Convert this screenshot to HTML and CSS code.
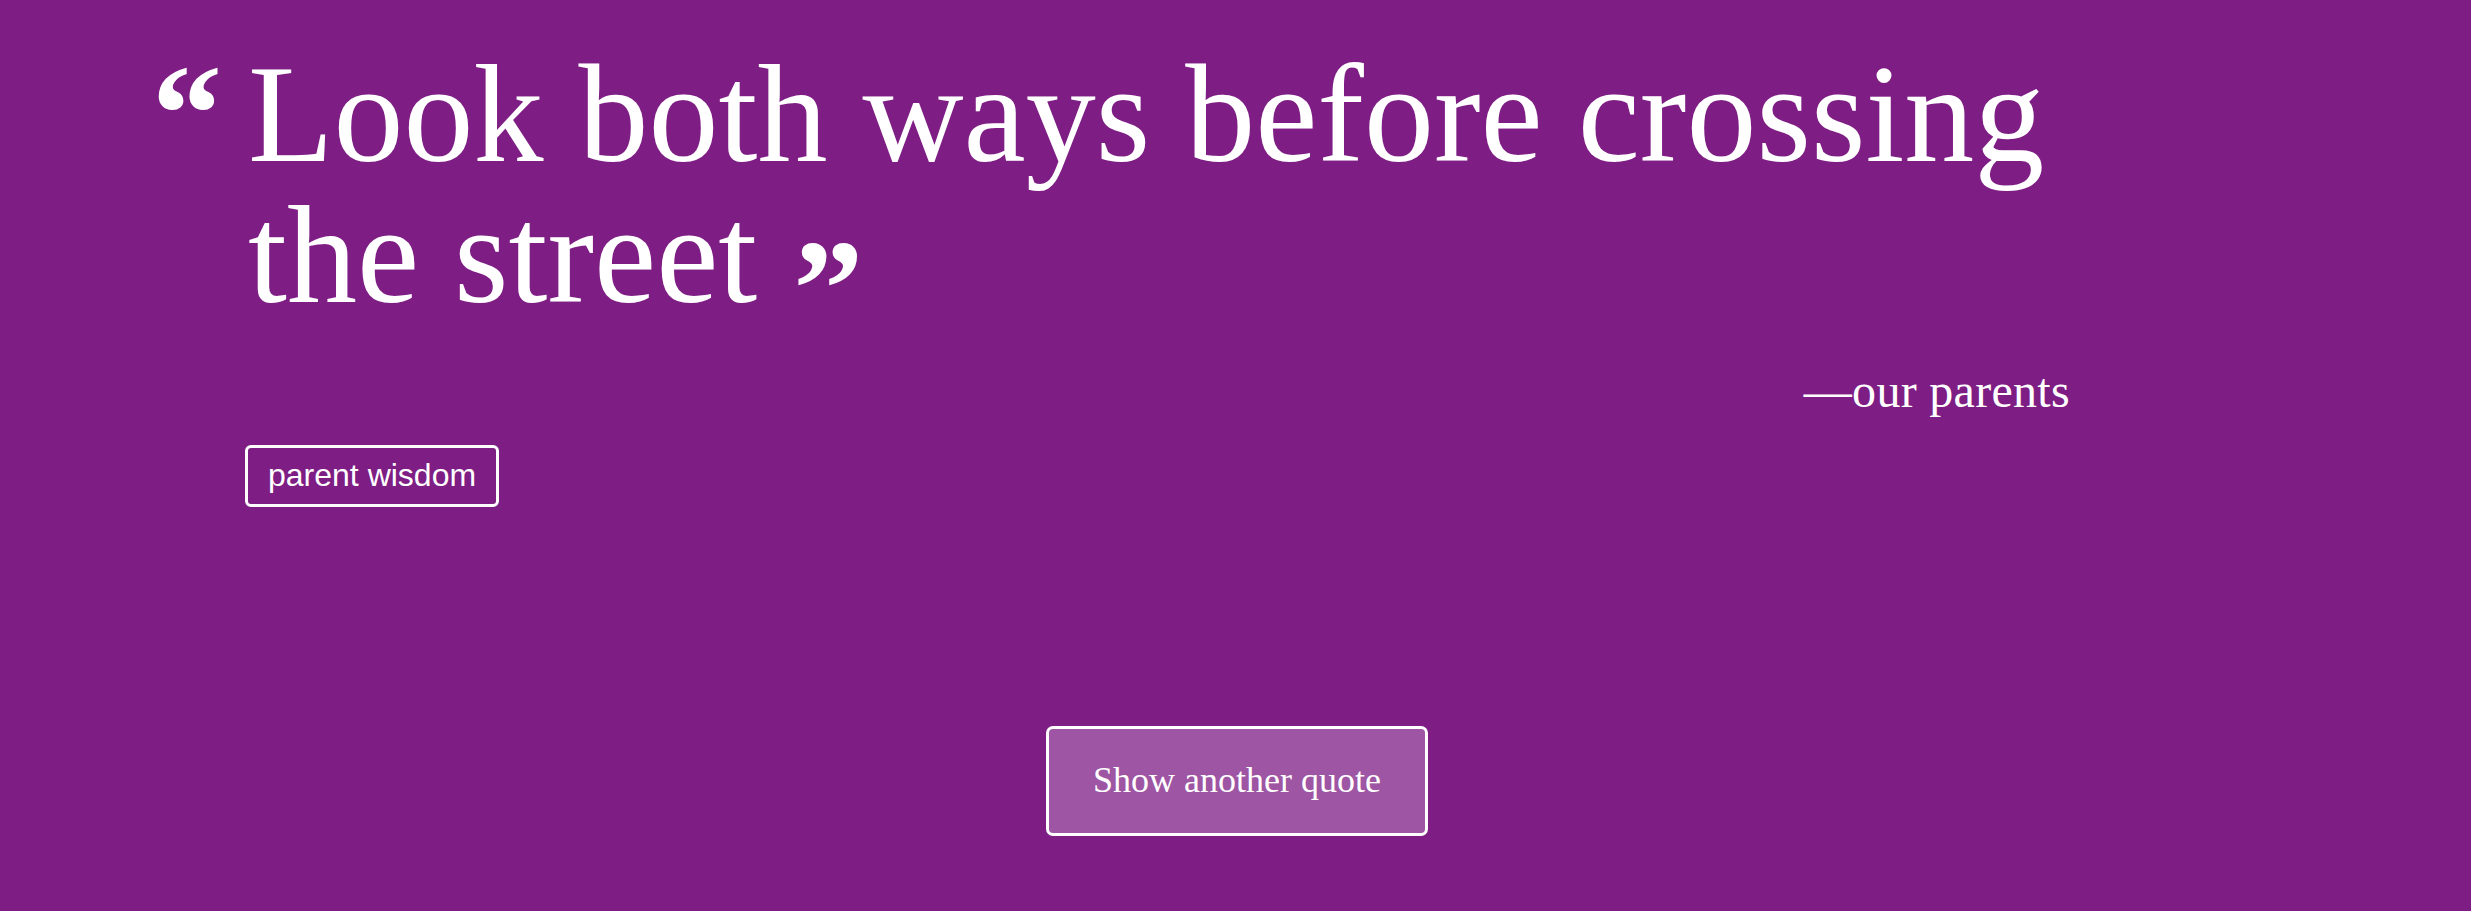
FILE: index.html
```html
<!DOCTYPE html>
<html lang="en">
<head>
<meta charset="utf-8">
<title>Random Quote</title>
<link rel="stylesheet" href="styles.css">
</head>
<body>
<main class="page">
  <section class="quote-box">
    <blockquote class="quote">
      <p class="quote-text"><span class="mark mark-open">“</span>Look both ways before crossing the street<span class="mark mark-close">”</span></p>
      <footer class="author">—our parents</footer>
    </blockquote>
    <ul class="tags">
      <li class="tag">parent wisdom</li>
    </ul>
  </section>
  <div class="actions">
    <button class="new-quote" type="button">Show another quote</button>
  </div>
</main>
</body>
</html>
```

FILE: styles.css
```css
html, body {
  margin: 0;
  padding: 0;
  height: 100%;
}

body {
  background: #7e1d84;
  color: #ffffff;
  font-family: "Liberation Serif", "Times New Roman", serif;
}

.page {
  padding-top: 43px;
  display: flex;
  flex-direction: column;
}

.quote-box {
  margin-left: 248px;
  width: 1822px;
}

.quote {
  margin: 0;
  padding: 0;
}

.quote-text {
  margin: 0;
  font-size: 140px;
  line-height: 141px;
  font-weight: 400;
  text-indent: -96px;
}

.mark {
  font-weight: 700;
}

.mark-open {
  display: inline-block;
  width: 96px;
  text-indent: 0;
}

.mark-close {
  line-height: 0;
  vertical-align: -34px;
  margin-left: 36px;
}

.author {
  margin-top: 38px;
  text-align: right;
  font-size: 48px;
  line-height: 55px;
  letter-spacing: 0.3px;
}

.tags {
  list-style: none;
  margin: 27px 0 0 -3px;
  padding: 0;
  display: flex;
  gap: 12px;
}

.tag {
  font-family: "Liberation Sans", Arial, sans-serif;
  font-size: 32px;
  line-height: 37px;
  padding: 9px 20px 10px;
  border: 3px solid #ffffff;
  border-radius: 6px;
}

.actions {
  margin-top: 219px;
  display: flex;
  justify-content: center;
  padding-left: 3px;
}

.new-quote {
  font-family: "Liberation Serif", "Times New Roman", serif;
  font-size: 36px;
  line-height: 41px;
  color: #ffffff;
  background: rgba(255, 255, 255, 0.25);
  border: 3px solid #ffffff;
  border-radius: 7px;
  padding: 31px 44px 32px;
  cursor: pointer;
}
```
